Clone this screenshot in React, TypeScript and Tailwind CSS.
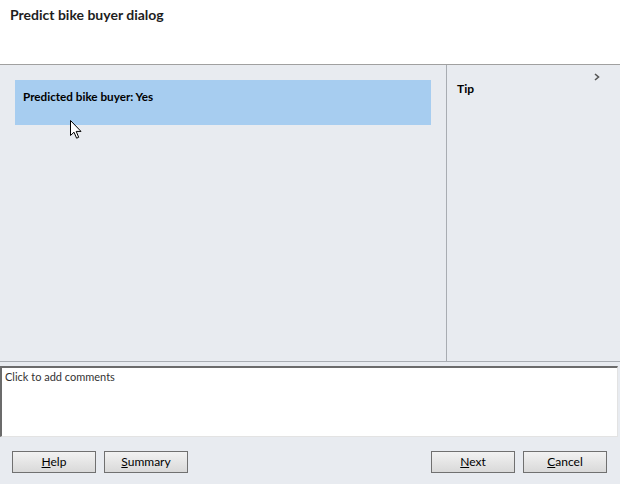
import React from 'react';

function DlgButton({ label, hot }: { label: string; hot: string }) {
  const rest = label.slice(1);
  return (
    <button className="w-[84px] h-[22px] border border-[#707070] bg-gradient-to-b from-[#f2f2f2] to-[#d9d9d9] text-[12px] text-black leading-none flex items-center justify-center">
      <span>
        <span className="underline">{hot}</span>
        {rest}
      </span>
    </button>
  );
}

export default function App() {
  return (
    <div className="w-[620px] h-[484px] flex flex-col bg-[#e8ebf0] font-['Lato',sans-serif] text-black overflow-hidden">
      {/* Header */}
      <div className="h-[65px] bg-white border-b border-[#a0a0a0] px-[10px] pt-[6px]">
        <h1 className="text-[14px] leading-[17px] font-bold text-[#1e1e1e]">Predict bike buyer dialog</h1>
      </div>

      {/* Main */}
      <div className="flex h-[297px] border-b border-[#a8acb2]">
        <div className="w-[447px] border-r border-[#a8acb2] pt-[15px] pl-[15px] pr-[15px] relative">
          <div className="h-[45px] bg-[#a7cdf0] pl-[8px] pt-[9px] text-[11.7px] leading-[15px] font-bold">
            Predicted bike buyer: Yes
          </div>
          {/* mouse cursor */}
          <svg className="absolute left-[70px] top-[55px]" width="12" height="19" viewBox="0 0 12 19">
            <path d="M0.5 0.5 L0.5 15.5 L4 12.2 L6.6 18.2 L8.7 17.3 L6.2 11.4 L11 11.4 Z" fill="white" stroke="black" strokeWidth="1" />
          </svg>
        </div>
        <div className="flex-1 relative pl-[10px] pt-[16px]">
          <span className="text-[12px] leading-[15px] font-bold block">Tip</span>
          <svg className="absolute right-[20px] top-[8px]" width="6" height="8" viewBox="0 0 6 8">
            <path d="M1 1 L4.5 4 L1 7" fill="none" stroke="#555" strokeWidth="1.6" />
          </svg>
        </div>
      </div>

      {/* Comments */}
      <div className="mt-[4px] mr-[2px] h-[71px] bg-white border-t-2 border-l-2 border-t-[#6b6b6b] border-l-[#6b6b6b] border-b border-r border-b-[#e3e3e3] border-r-[#e3e3e3] px-[3px] pt-[2px]">
        <span className="text-[11px] leading-[14px] text-[#333] block">Click to add comments</span>
      </div>

      {/* Buttons */}
      <div className="flex items-center justify-between pl-[12px] pr-[13px] mt-[14px]">
        <div className="flex gap-[8px]">
          <DlgButton label="Help" hot="H" />
          <DlgButton label="Summary" hot="S" />
        </div>
        <div className="flex gap-[8px]">
          <DlgButton label="Next" hot="N" />
          <DlgButton label="Cancel" hot="C" />
        </div>
      </div>
    </div>
  );
}
